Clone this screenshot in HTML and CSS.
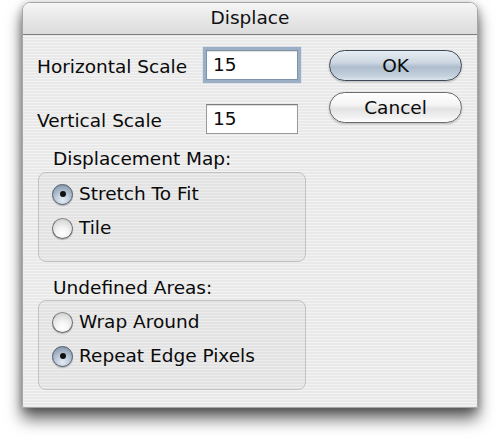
FILE: index.html
```html
<!DOCTYPE html>
<html>
<head>
<meta charset="utf-8">
<link rel="stylesheet" href="styles.css">
</head>
<body>
<div class="window">
  <div class="titlebar">Displace</div>
  <div class="content">
    <div class="left">
      <div class="field">
        <span class="label">Horizontal Scale</span>
        <span class="input focused">15</span>
      </div>
      <div class="field field-second">
        <span class="label">Vertical Scale</span>
        <span class="input">15</span>
      </div>
      <div class="group-label">Displacement Map:</div>
      <div class="group">
        <div class="radio-row"><span class="radio checked"></span>Stretch To Fit</div>
        <div class="radio-row"><span class="radio"></span>Tile</div>
      </div>
      <div class="group-label group-label-second">Undefined Areas:</div>
      <div class="group group-second">
        <div class="radio-row"><span class="radio"></span>Wrap Around</div>
        <div class="radio-row"><span class="radio checked"></span>Repeat Edge Pixels</div>
      </div>
    </div>
    <div class="buttons">
      <div class="btn btn-default">OK</div>
      <div class="btn">Cancel</div>
    </div>
  </div>
</div>
</body>
</html>
```
FILE: styles.css
```css
html, body {
  margin: 0;
  padding: 0;
  background: #ffffff;
}

body {
  width: 500px;
  height: 444px;
  overflow: hidden;
  font-family: "DejaVu Sans", "Verdana", sans-serif;
  font-size: 18.5px;
  color: #0a0a0a;
}

.window {
  margin: 2px 0 0 22px;
  width: 456px;
  height: 406px;
  box-sizing: border-box;
  border: 1px solid #a6a6a6;
  border-radius: 8px 8px 2px 2px;
  box-shadow: 0 11px 16px rgba(0, 0, 0, 0.6), 0 2px 8px rgba(0, 0, 0, 0.3);
  background: repeating-linear-gradient(180deg, #f3f3f3 0px, #f3f3f3 1.5px, #e9e9e9 1.5px, #e9e9e9 3px);
  display: flex;
  flex-direction: column;
  overflow: hidden;
}

.titlebar {
  height: 31px;
  flex: none;
  border-bottom: 1px solid #7d7d7d;
  background: linear-gradient(180deg, #f6f6f6 0%, #e9e9e9 45%, #dcdcdc 100%);
  text-align: center;
  line-height: 30px;
  font-size: 18.5px;
  color: #111;
}

.content {
  display: flex;
  padding: 15px 15px 0 14px;
}

.left {
  width: 270px;
  display: flex;
  flex-direction: column;
}

.field {
  display: grid;
  grid-template-columns: 169px 92px;
  align-items: center;
  height: 30px;
}

.field-second {
  margin-top: 24px;
}

.label {
  margin-top: 4px;
  line-height: 22px;
  white-space: nowrap;
}

.input {
  box-sizing: border-box;
  height: 30px;
  background: #ffffff;
  border: 1px solid #9a9a9a;
  border-top-color: #7c7c7c;
  box-shadow: inset 0 1px 1px rgba(0, 0, 0, 0.15);
  padding-left: 6px;
  line-height: 28px;
  font-size: 18.5px;
}

.input.focused {
  border-color: #7f93aa;
  box-shadow: 0 0 1px 3px rgba(140, 163, 190, 0.85), inset 0 1px 1px rgba(0, 0, 0, 0.12);
}

.group-label {
  margin-top: 14px;
  padding-left: 16px;
  line-height: 22px;
}

.group-label-second {
  margin-top: 15px;
}

.group {
  margin: 2px 0 0 1px;
  width: 268px;
  height: 90px;
  box-sizing: border-box;
  border: 1px solid #c2c2c2;
  border-radius: 8px;
  background: rgba(0, 0, 0, 0.025);
  padding: 9px 0 0 13px;
  display: flex;
  flex-direction: column;
  gap: 10px;
}

.group-second {
  margin-top: 1px;
}

.radio-row {
  display: flex;
  align-items: center;
  height: 24px;
  line-height: 22px;
  white-space: nowrap;
}

.radio {
  position: relative;
  width: 21px;
  height: 21px;
  box-sizing: border-box;
  border-radius: 50%;
  border: 1px solid #6a6a6a;
  border-top-color: #8a8a8a;
  margin-right: 6px;
  flex: none;
  background: radial-gradient(circle at 50% 75%, #ffffff 0%, #f4f4f4 35%, #d9d9d9 75%, #bdbdbd 100%);
  box-shadow: 0 1px 1px rgba(0, 0, 0, 0.25);
}

.radio.checked {
  border-color: #4f5a66;
  background: radial-gradient(circle at 50% 80%, #e4ecf4 0%, #bccada 40%, #8d9fb3 80%, #7a8ca1 100%);
}

.radio.checked::after {
  content: "";
  position: absolute;
  left: 50%;
  top: 50%;
  width: 6px;
  height: 6px;
  margin: -3px 0 0 -3px;
  border-radius: 50%;
  background: #111;
}

.buttons {
  margin-left: 22px;
  display: flex;
  flex-direction: column;
  gap: 11px;
}

.btn {
  width: 133px;
  height: 31px;
  box-sizing: border-box;
  border-radius: 16px;
  border: 1px solid #6b6b6b;
  text-align: center;
  line-height: 29px;
  background: linear-gradient(180deg, #ffffff 0%, #f4f4f4 40%, #e3e3e3 55%, #f2f2f2 85%, #ffffff 100%);
  box-shadow: 0 1px 2px rgba(0, 0, 0, 0.25);
}

.btn-default {
  border-color: #3f4b58;
  background: linear-gradient(180deg, #e6ecf2 0%, #cdd7e2 40%, #aebdcd 55%, #c3d0dd 85%, #dbe4ec 100%);
}
```
